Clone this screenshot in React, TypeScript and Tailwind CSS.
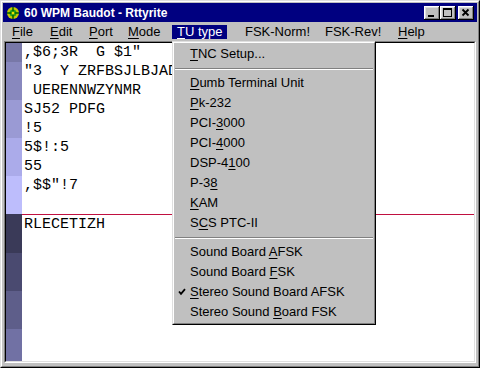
import React from 'react';

type MenuItem = { pre: string; key: string; post: string; checked?: boolean } | 'sep';

const tuItems: MenuItem[] = [
    { pre: '', key: 'T', post: 'NC Setup...' },
    'sep',
    { pre: '', key: 'D', post: 'umb Terminal Unit' },
    { pre: '', key: 'P', post: 'k-232' },
    { pre: 'PCI-', key: '3', post: '000' },
    { pre: 'PCI-', key: '4', post: '000' },
    { pre: 'DSP-4', key: '1', post: '00' },
    { pre: 'P-3', key: '8', post: '' },
    { pre: '', key: 'K', post: 'AM' },
    { pre: 'S', key: 'C', post: 'S PTC-II' },
    'sep',
    { pre: 'Sound Board ', key: 'A', post: 'FSK' },
    { pre: 'Sound Board ', key: 'F', post: 'SK' },
    { pre: '', key: 'S', post: 'tereo Sound Board AFSK', checked: true },
    { pre: 'Stereo Sound ', key: 'B', post: 'oard FSK' },
];

const menuBar = [
    { key: 'F', post: 'ile', w: 'w-[38px]' },
    { key: 'E', post: 'dit', w: 'w-[39px]' },
    { key: 'P', post: 'ort', w: 'w-[39px]' },
    { key: 'M', post: 'ode', w: 'w-[49px]' },
    { key: 'T', post: 'U type', w: 'w-[55px]', active: true },
    { key: '', post: 'FSK-Norm!', w: 'w-[80px] ml-[13px]' },
    { key: '', post: 'FSK-Rev!', w: 'w-[73px]' },
    { key: 'H', post: 'elp', w: 'w-[50px]' },
];

const rxLines = [
    ',$6;3R  G $1"',
    '"3  Y ZRFBSJLBJAD',
    ' UERENNWZYNMR',
    'SJ52 PDFG',
    '!5',
    '5$!:5',
    '55',
    ',$$"!7',
    '',
];

// bands on the left margin, two text lines each
const topBands = [
    { h: 'h-[19px]', c: 'bg-[#7878a8]' },
    { h: 'h-[38px]', c: 'bg-[#8888be]' },
    { h: 'h-[38px]', c: 'bg-[#9a9ad4]' },
    { h: 'h-[38px]', c: 'bg-[#ababea]' },
    { h: 'h-[38px]', c: 'bg-[#bdbdfc]' },
];
const bottomBands = [
    { h: 'h-[39px]', c: 'bg-[#3a3a58]' },
    { h: 'h-[38px]', c: 'bg-[#4a4a70]' },
    { h: 'h-[38px]', c: 'bg-[#5e5e8a]' },
    { h: 'flex-1', c: 'bg-[#7171a4]' },
];

const raised = 'shadow-[inset_-1px_-1px_#000,inset_1px_1px_#fff,inset_-2px_-2px_#808080,inset_2px_2px_#dfdfdf]';

const CaptionButton: React.FC<{ kind: 'min' | 'max' | 'close' }> = ({ kind }) => (
    <div className={`w-[16px] h-[14px] bg-[#c0c0c0] ${raised}`}>
        <svg width="16" height="14" viewBox="0 0 16 14" shapeRendering="crispEdges">
            {kind === 'min' && <rect x="4" y="9" width="6" height="2" fill="#000" />}
            {kind === 'max' && (
                <g fill="#000">
                    <rect x="3" y="2" width="9" height="2" />
                    <rect x="3" y="2" width="1" height="9" />
                    <rect x="11" y="2" width="1" height="9" />
                    <rect x="3" y="10" width="9" height="1" />
                </g>
            )}
            {kind === 'close' && (
                <path d="M4.5 3.5 L10.5 9.5 M10.5 3.5 L4.5 9.5" stroke="#000" strokeWidth="1.8" shapeRendering="auto" />
            )}
        </svg>
    </div>
);

const AppIcon = () => (
    <svg width="14" height="14" viewBox="0 0 14 14">
        <circle cx="7" cy="7" r="6" fill="#c8c800" />
        <circle cx="7" cy="7" r="3.5" fill="#20a020" />
        <path d="M7 1 V13 M1 7 H13" stroke="#006000" strokeWidth="1.5" />
        <circle cx="7" cy="7" r="1.5" fill="#e8e800" />
    </svg>
);

export default function App() {
    return (
        <div className="w-[480px] h-[368px] bg-[#c0c0c0] border border-t-[#dfdfdf] border-l-[#dfdfdf] border-r-black border-b-black relative font-['Liberation_Sans',Arial,sans-serif] text-[13px] text-black select-none overflow-hidden">
            <div className="h-full border border-t-white border-l-white border-r-[#808080] border-b-[#808080] p-px flex flex-col">
                {/* title bar */}
                <div className="h-[19px] bg-[#000080] flex items-center pl-[3px] pr-[3px] shrink-0">
                    <AppIcon />
                    <span className="ml-[4px] text-white font-bold text-[12px] leading-none">60 WPM Baudot - Rttyrite</span>
                    <div className="ml-auto flex items-center">
                        <CaptionButton kind="min" />
                        <CaptionButton kind="max" />
                        <div className="w-[2px]" />
                        <CaptionButton kind="close" />
                    </div>
                </div>

                {/* menu bar */}
                <div className="h-[19px] flex items-center pl-[4px] shrink-0">
                    {menuBar.map((m, i) => (
                        <div
                            key={i}
                            className={`${m.w} h-[14px] leading-[14px] pl-[5px] whitespace-pre ${m.active ? 'bg-[#000080] text-white' : ''}`}
                        >
                            {m.key && <span className="underline underline-offset-[2px]">{m.key}</span>}
                            {m.post}
                        </div>
                    ))}
                </div>

                {/* client area */}
                <div className="flex-1 ml-px mr-px mb-[2px] flex border border-t-[#808080] border-l-[#808080] border-r-white border-b-white">
                    <div className="flex-1 flex border border-t-black border-l-black border-r-[#dfdfdf] border-b-[#dfdfdf] bg-white">
                        <div className="w-[16px] flex flex-col shrink-0">
                            {topBands.map((b, i) => (
                                <div key={i} className={`${b.h} ${b.c}`} />
                            ))}
                            {bottomBands.map((b, i) => (
                                <div key={i} className={`${b.h} ${b.c}`} />
                            ))}
                        </div>
                        <div className="flex-1 flex flex-col font-['Liberation_Mono','Courier_New',monospace] text-[15px]">
                            {rxLines.map((l, i) => (
                                <div key={i} className="h-[19px] leading-[19px] pl-[2px] whitespace-pre">{l}</div>
                            ))}
                            <div className="h-px bg-[#c01040]" />
                            <div className="h-[19px] leading-[19px] pl-[2px] whitespace-pre">RLECETIZH</div>
                        </div>
                    </div>
                </div>
            </div>

            {/* TU type drop-down */}
            <div className="absolute left-[171px] top-[40px] w-[204px] bg-[#c0c0c0] border border-t-[#dfdfdf] border-l-[#dfdfdf] border-r-black border-b-black">
                <div className="border border-t-white border-l-white border-r-[#808080] border-b-[#808080] p-px">
                    {tuItems.map((it, i) =>
                        it === 'sep' ? (
                            <div key={i} className="h-[9px] flex flex-col justify-center">
                                <div className="h-px bg-[#808080]" />
                                <div className="h-px bg-white" />
                            </div>
                        ) : (
                            <div key={i} className="relative h-[20px] leading-[20px] pl-[15px] whitespace-pre">
                                {it.checked && (
                                    <svg className="absolute left-[3px] top-[6px]" width="8" height="8" viewBox="0 0 8 8">
                                        <path d="M1 3.5 L3 5.8 L7 1.2" stroke="#000" strokeWidth="1.8" fill="none" />
                                    </svg>
                                )}
                                {it.pre}
                                <span className="underline underline-offset-[2px]">{it.key}</span>
                                {it.post}
                            </div>
                        )
                    )}
                </div>
            </div>
        </div>
    );
}
